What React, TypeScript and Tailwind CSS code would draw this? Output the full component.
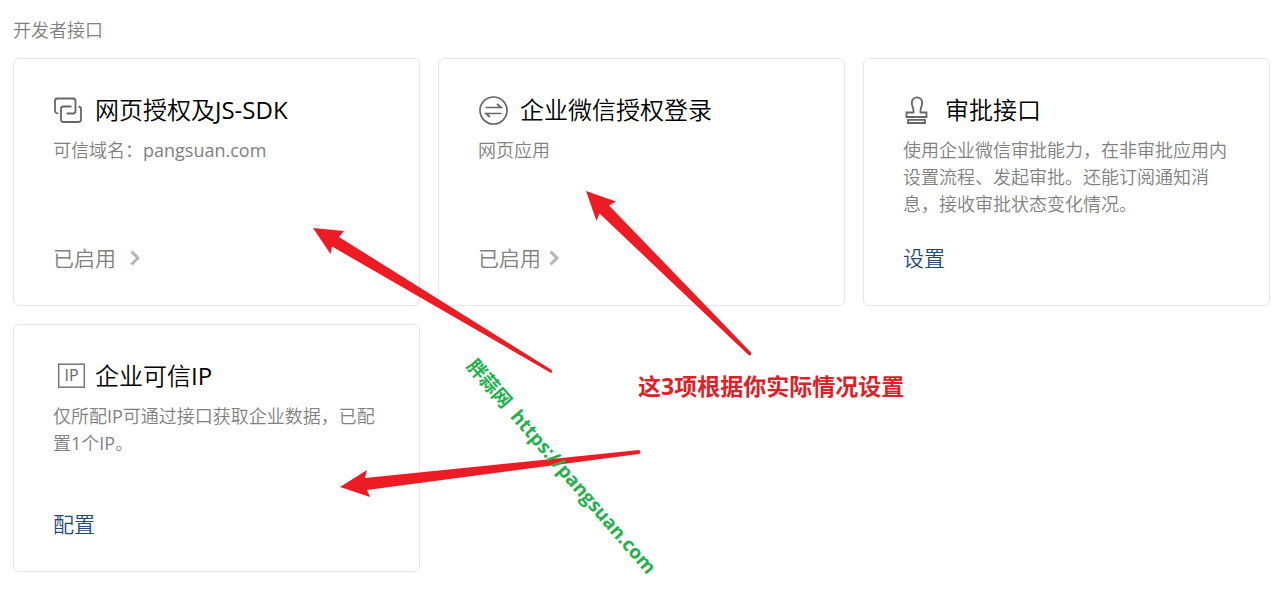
import React from "react";

const LinkIcon = () => (
  <svg width="30" height="30" viewBox="0 0 30 30" fill="none" stroke="#666" strokeWidth="1.8" className="shrink-0">
    <path d="M5.500 18.500L3.500 18Q2 17.500 2 16V6a2.500 2.500 0 0 1 2.500-2.500h15.500a2.500 2.500 0 0 1 2.500 2.500v10a2.500 2.500 0 0 1-2.500 2.500H13.500" />
    <path d="M18.500 11.500H10.500a2.500 2.500 0 0 0-2.500 2.500v10.500a2.500 2.500 0 0 0 2.500 2.500h15a2.500 2.500 0 0 0 2.500-2.500V13.500Q28 12 25.500 11.500" />
  </svg>
);

const LoginIcon = () => (
  <svg width="30" height="30" viewBox="0 0 30 30" fill="none" stroke="#666" strokeWidth="1.7" className="shrink-0">
    <circle cx="15.500" cy="15.500" r="13.500" />
    <path d="M7.500 12.500h15.500L19 9M23.500 18.500H8L12 22" />
  </svg>
);

const StampIcon = () => (
  <svg width="30" height="30" viewBox="0 0 30 30" fill="none" stroke="#666" strokeWidth="1.8" className="shrink-0">
    <path d="M10.500 17.500c.8-4-1.700-5.500-1.700-10a5.200 5.200 0 0 1 10.400 0c0 4.500-2.500 6-1.700 10H23.500v4.500H3.500v-4.500z" />
    <path d="M5 24.800h17v3.200H5z" />
  </svg>
);

const IpIcon = () => (
  <svg width="36" height="30" viewBox="0 0 36 30" fill="none" className="shrink-0">
    <rect x="5.700" y="3.200" width="25.600" height="23" stroke="#777" strokeWidth="1.500" />
    <text x="18.500" y="20" textAnchor="middle" className="fill-[#666] text-base">IP</text>
  </svg>
);

const Chevron = () => (
  <svg width="10" height="16" viewBox="0 0 10 16" fill="none" stroke="#b5b5b5" strokeWidth="3">
    <path d="M1.500 1.500L8 8l-6.500 6.500" />
  </svg>
);

type CardProps = {
  icon: React.ReactNode;
  title: string;
  desc: string;
  children: React.ReactNode;
};

const Card = ({icon, title, desc, children}: CardProps) => (
  <section className="flex min-h-[248px] flex-col rounded-md border border-[#e4e6e9] px-[39px] pt-[33px] pb-[33px]">
    <div className="flex items-center">
      <div className="flex w-[42px]">{icon}</div>
      <h3 className="text-2xl leading-9 text-black">{title}</h3>
    </div>
    <p className="mt-[9px] text-lg leading-[27px] text-[#808080]">{desc}</p>
    <div className="mt-auto text-[21px] leading-7">{children}</div>
  </section>
);

const Annotations = () => (
  <div className="pointer-events-none absolute top-0 left-0 font-['Open_Sans','Noto_Sans_CJK_SC',sans-serif] font-bold">
    <svg width="1286" height="592" viewBox="0 0 1286 592" fill="#ed1c24" stroke="none">
      <path d="M313 228L344 231L339 237L551 369.500Q553.500 371.500 551 373L332 246.500L330.500 254Z" />
      <path d="M586 191L616 201.500L609 205.500L751 352.500Q752 355.500 749 355.500L599.500 213.500L596.500 221Z" />
      <path d="M340 487L367 470L365 478L639 450Q642 452 639 454L367 490L370 497Z" />
    </svg>
    <p className="absolute top-[370px] left-[638px] text-[23px] leading-8 whitespace-nowrap text-[#e02027]">这3项根据你实际情况设置</p>
    <p className="absolute top-[354px] left-[480px] origin-top-left rotate-[49deg] text-[19px] leading-6 whitespace-pre text-[#22b14c]">胖蒜网  https://pangsuan.com</p>
  </div>
);

const App = () => {
  return (
    <main className="relative min-h-screen overflow-hidden bg-white pt-4 pr-4 pb-5 pl-[13px] font-['Open_Sans','Noto_Sans_CJK_SC_DemiLight','Noto_Sans_CJK_SC',sans-serif]">
      <h2 className="text-lg leading-7 text-[#808080]">开发者接口</h2>
      <div className="mt-[14px] grid grid-cols-3 gap-[18px]">
        <Card icon={<LinkIcon />} title="网页授权及JS-SDK" desc="可信域名：pangsuan.com">
          <button className="flex items-center gap-[14px] text-[#808080]">已启用<Chevron /></button>
        </Card>
        <Card icon={<LoginIcon />} title="企业微信授权登录" desc="网页应用">
          <button className="flex items-center gap-2 text-[#808080]">已启用<Chevron /></button>
        </Card>
        <Card icon={<StampIcon />} title="审批接口" desc="使用企业微信审批能力，在非审批应用内设置流程、发起审批。还能订阅通知消息，接收审批状态变化情况。">
          <a href="#" className="text-[#1d4a78]">设置</a>
        </Card>
        <Card icon={<IpIcon />} title="企业可信IP" desc="仅所配IP可通过接口获取企业数据，已配置1个IP。">
          <a href="#" className="text-[#1d4a78]">配置</a>
        </Card>
      </div>
      <Annotations />
    </main>
  );
};

export default App;
